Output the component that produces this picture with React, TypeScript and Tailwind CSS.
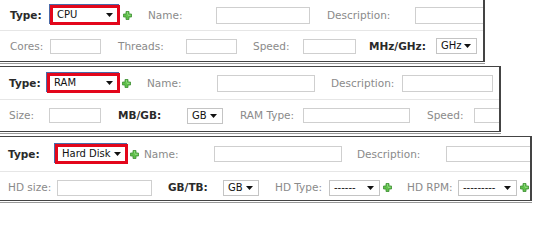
import React from "react";

function Plus({ ml }: { ml: string }) {
  return (
    <svg className={`${ml} shrink-0`} width="9" height="9" viewBox="0 0 9 9">
      <path
        d="M3 0.5h3v2.5h2.5v3H6v2.5H3V6H0.5V3H3z"
        fill="#5fbf4a"
        stroke="#3d8f34"
        strokeWidth="0.8"
      />
      <path d="M3.8 1.3h1.2v2.5h2.6v1H5v0" fill="#9be08a" />
    </svg>
  );
}

function Arrow() {
  return (
    <svg width="7" height="4" viewBox="0 0 7 4" className="shrink-0">
      <path d="M0 0h7L3.5 4z" fill="#111" />
    </svg>
  );
}

function Label({
  text,
  ml,
  w,
  bold = false,
}: {
  text: string;
  ml: string;
  w: string;
  bold?: boolean;
}) {
  return (
    <span
      className={`${ml} ${w} shrink-0 whitespace-nowrap ${
        bold ? "font-bold text-[#2a2a2a]" : "text-[#8a8a8a]"
      }`}
    >
      {text}
    </span>
  );
}

function Input({ ml, w, h }: { ml: string; w: string; h: string }) {
  return (
    <div className={`${ml} ${w} ${h} shrink-0 border border-[#cfcfcf] bg-white`} />
  );
}

function Select({ ml, w, value }: { ml: string; w: string; value: string }) {
  return (
    <div
      className={`${ml} ${w} h-[16px] shrink-0 flex items-center justify-between border border-[#c4c4c4] bg-white pl-[4px] pr-[5px] text-[#111] text-[10px]`}
    >
      <span className="whitespace-nowrap">{value}</span>
      <Arrow />
    </div>
  );
}

function TypeSelect({ ml, w, value }: { ml: string; w: string; value: string }) {
  return (
    <div
      className={`${ml} ${w} h-[20px] shrink-0 flex items-center justify-between border-[3px] border-[#e3061b] bg-white pl-[4px] pr-[4px] text-[10px] text-[#111] shadow-[-1px_-1px_0_#4a6aa8]`}
    >
      <span className="whitespace-nowrap">{value}</span>
      <Arrow />
    </div>
  );
}

export default function App() {
  return (
    <div
      className="w-[540px] h-[206px] overflow-hidden bg-white text-[10.5px] leading-none"
      style={{ fontFamily: '"DejaVu Sans", Verdana, sans-serif' }}
    >
      {/* CPU */}
      <div className="w-[485px] border-b border-[#9a9a9a] pb-[1px]">
        <div className="overflow-hidden border-r-2 border-b border-[#444]">
          <div className="flex h-[31px] items-center border-b border-[#e6e6e6]">
            <Label text="Type:" ml="ml-[10px]" w="w-[30px]" bold />
            <TypeSelect ml="ml-[10px]" w="w-[70px]" value="CPU" />
            <Plus ml="ml-[3px]" />
            <Label text="Name:" ml="ml-[16px]" w="w-[33px]" />
            <Input ml="ml-[35px]" w="w-[94px]" h="h-[17px]" />
            <Label text="Description:" ml="ml-[17px]" w="w-[64px]" />
            <Input ml="ml-[24px]" w="w-[100px]" h="h-[17px]" />
          </div>
          <div className="flex h-[30px] items-center">
            <Label text="Cores:" ml="ml-[10px]" w="w-[34px]" />
            <Input ml="ml-[6px]" w="w-[51px]" h="h-[15px]" />
            <Label text="Threads:" ml="ml-[17px]" w="w-[45px]" />
            <Input ml="ml-[23px]" w="w-[51px]" h="h-[15px]" />
            <Label text="Speed:" ml="ml-[16px]" w="w-[39px]" />
            <Input ml="ml-[11px]" w="w-[53px]" h="h-[15px]" />
            <Label text="MHz/GHz:" ml="ml-[13px]" w="w-[64px]" bold />
            <Select ml="ml-[3px]" w="w-[41px]" value="GHz" />
          </div>
        </div>
      </div>

      {/* RAM */}
      <div className="mt-[2px] w-[501px] border-b border-[#9a9a9a] pb-[1px]">
        <div className="overflow-hidden border-t border-r-2 border-b border-[#444]">
          <div className="flex h-[33px] items-center border-b border-[#e6e6e6]">
            <Label text="Type:" ml="ml-[9px]" w="w-[30px]" bold />
            <TypeSelect ml="ml-[8px]" w="w-[73px]" value="RAM" />
            <Plus ml="ml-[2px]" />
            <Label text="Name:" ml="ml-[16px]" w="w-[33px]" />
            <Input ml="ml-[37px]" w="w-[98px]" h="h-[17px]" />
            <Label text="Description:" ml="ml-[16px]" w="w-[61px]" />
            <Input ml="ml-[10px]" w="w-[91px]" h="h-[17px]" />
          </div>
          <div className="flex h-[31px] items-center">
            <Label text="Size:" ml="ml-[9px]" w="w-[25px]" />
            <Input ml="ml-[15px]" w="w-[52px]" h="h-[15px]" />
            <Label text="MB/GB:" ml="ml-[17px]" w="w-[43px]" bold />
            <Select ml="ml-[26px]" w="w-[36px]" value="GB" />
            <Label text="RAM Type:" ml="ml-[17px]" w="w-[53px]" />
            <Input ml="ml-[10px]" w="w-[107px]" h="h-[15px]" />
            <Label text="Speed:" ml="ml-[17px]" w="w-[37px]" />
            <Input ml="ml-[10px]" w="w-[60px]" h="h-[15px]" />
          </div>
        </div>
      </div>

      {/* Hard disk */}
      <div className="mt-[2px] w-[532px] border-b border-[#9a9a9a] pb-[1px]">
        <div className="overflow-hidden border-t border-r-2 border-b border-[#444]">
          <div className="flex h-[35px] items-center border-b border-[#e6e6e6]">
            <Label text="Type:" ml="ml-[8px]" w="w-[30px]" bold />
            <TypeSelect ml="ml-[17px]" w="w-[73px]" value="Hard Disk" />
            <Plus ml="ml-[2px]" />
            <Label text="Name:" ml="ml-[5px]" w="w-[33px]" />
            <Input ml="ml-[37px]" w="w-[128px]" h="h-[16px]" />
            <Label text="Description:" ml="ml-[15px]" w="w-[61px]" />
            <Input ml="ml-[28px]" w="w-[100px]" h="h-[16px]" />
          </div>
          <div className="flex h-[28px] items-center pt-[3px]">
            <Label text="HD size:" ml="ml-[8px]" w="w-[42px]" />
            <Input ml="ml-[7px]" w="w-[95px]" h="h-[16px]" />
            <Label text="GB/TB:" ml="ml-[16px]" w="w-[40px]" bold />
            <Select ml="ml-[15px]" w="w-[36px]" value="GB" />
            <Label text="HD Type:" ml="ml-[16px]" w="w-[49px]" />
            <Select ml="ml-[5px]" w="w-[51px]" value="------" />
            <Plus ml="ml-[3px]" />
            <Label text="HD RPM:" ml="ml-[15px]" w="w-[43px]" />
            <Select ml="ml-[8px]" w="w-[59px]" value="---------" />
            <Plus ml="ml-[3px]" />
          </div>
        </div>
      </div>
    </div>
  );
}
